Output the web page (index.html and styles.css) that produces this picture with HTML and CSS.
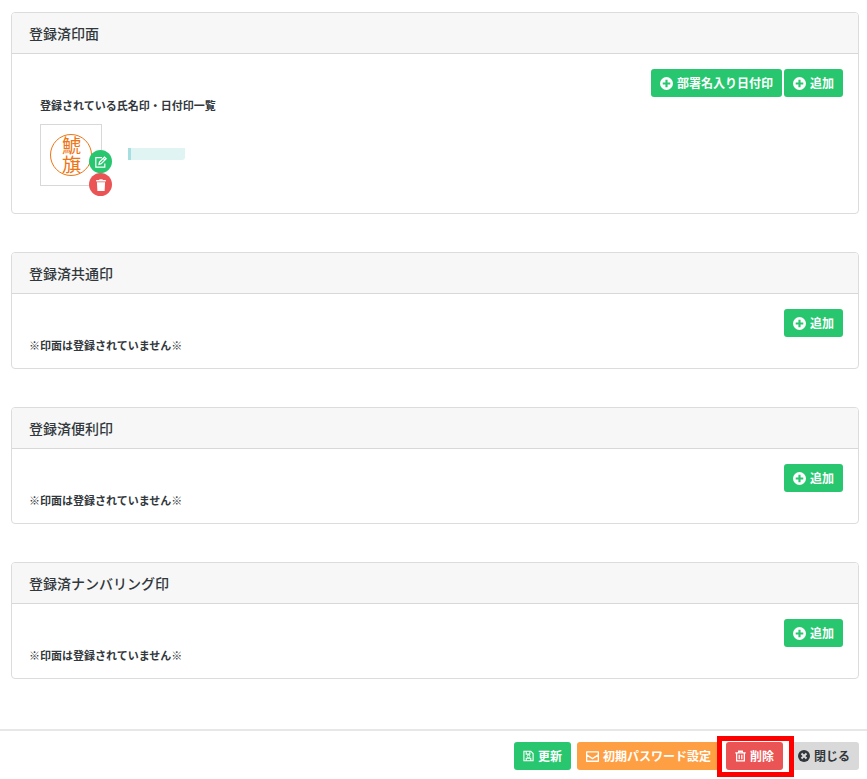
FILE: index.html
```html
<!DOCTYPE html>
<html lang="ja">
<head>
<meta charset="utf-8">
<meta name="viewport" content="width=device-width, initial-scale=1">
<title>登録済印面</title>
<link rel="stylesheet" href="styles.css">
</head>
<body>
<svg class="sprite" aria-hidden="true">
  <symbol id="plus" viewBox="0 0 12 12"><path fill="currentColor" fill-rule="evenodd" d="M6 0a6 6 0 1 0 0 12A6 6 0 0 0 6 0zM5 2.500h2V5h2.500v2H7v2.500H5V7H2.500V5H5z"/></symbol>
  <symbol id="close" viewBox="0 0 12 12"><circle cx="6" cy="6" r="6" fill="currentColor"/><path d="M3.500 3.500l5 5M8.500 3.500l-5 5" stroke="#d9d9d9" stroke-width="2"/></symbol>
  <symbol id="save" viewBox="0 0 12 12"><path fill="none" stroke="currentColor" stroke-width="1.200" d="M1 .8h7.500L11 3.300v7.900H1zM3.500 1v3h4V1M3.500 11V8.500h5V11"/><circle cx="6" cy="6.500" r="1.500" fill="none" stroke="currentColor"/></symbol>
  <symbol id="mail" viewBox="0 0 12 12"><path fill="none" stroke="currentColor" stroke-width="1.200" stroke-linejoin="round" d="M.6 1.800h10.800v8.600H.6zM.6 4.500L6 8l5.400-3.500"/></symbol>
  <symbol id="trash-line" viewBox="0 0 12 12"><path fill="none" stroke="currentColor" stroke-width="1.400" d="M.3 2.500h11.400M4 2.500V.8h4v1.700M1.800 2.500v8.700h8.400V2.500M4.600 4.500v5M7.400 4.500v5"/></symbol>
  <symbol id="trash" viewBox="0 0 12 12"><path fill="currentColor" d="M1.200 1H4l.7-.8h2.600L8 1h2.800v1.500H1.200zM1.900 3.200h8.200L9.600 12H2.400z"/></symbol>
  <symbol id="edit" viewBox="0 0 12 12"><path fill="none" stroke="currentColor" stroke-width="1.200" d="M7 1.600H.8v9.600h9V7.500M4 8.300l.5-2.300L9.500 1l1.700 1.700-5 5zM8.300 2.300L10 4"/></symbol>
</svg>

<main class="cards">
  <section class="card">
    <h2 class="card-title">登録済印面</h2>
    <div class="card-body">
      <div class="actions">
        <button type="button" class="btn green"><svg class="icon large"><use href="#plus"/></svg>部署名入り日付印</button>
        <button type="button" class="btn green"><svg class="icon large"><use href="#plus"/></svg>追加</button>
      </div>
      <div class="registered">
        <h3 class="label">登録されている氏名印・日付印一覧</h3>
        <div class="stamp-row">
          <div class="thumb">
            <div class="seal">鯱旗</div>
            <div class="tools">
              <button type="button" class="round green" aria-label="編集"><svg class="icon"><use href="#edit"/></svg></button>
              <button type="button" class="round red" aria-label="削除"><svg class="icon"><use href="#trash"/></svg></button>
            </div>
          </div>
          <div class="mask"></div>
        </div>
      </div>
    </div>
  </section>

  <section class="card">
    <h2 class="card-title">登録済共通印</h2>
    <div class="card-body">
      <div class="actions"><button type="button" class="btn green"><svg class="icon large"><use href="#plus"/></svg>追加</button></div>
      <p class="label">※印面は登録されていません※</p>
    </div>
  </section>

  <section class="card">
    <h2 class="card-title">登録済便利印</h2>
    <div class="card-body">
      <div class="actions"><button type="button" class="btn green"><svg class="icon large"><use href="#plus"/></svg>追加</button></div>
      <p class="label">※印面は登録されていません※</p>
    </div>
  </section>

  <section class="card">
    <h2 class="card-title">登録済ナンバリング印</h2>
    <div class="card-body">
      <div class="actions"><button type="button" class="btn green"><svg class="icon large"><use href="#plus"/></svg>追加</button></div>
      <p class="label">※印面は登録されていません※</p>
    </div>
  </section>
</main>

<footer class="footer">
  <button type="button" class="btn green"><svg class="icon small"><use href="#save"/></svg>更新</button>
  <button type="button" class="btn orange"><svg class="icon large"><use href="#mail"/></svg>初期パスワード設定</button>
  <div class="marked"><button type="button" class="btn red"><svg class="icon small"><use href="#trash-line"/></svg>削除</button></div>
  <button type="button" class="btn gray"><svg class="icon"><use href="#close"/></svg>閉じる</button>
</footer>
</body>
</html>
```
FILE: styles.css
```css
* {
  box-sizing: border-box;
}

body {
  margin: 0;
  background: #fff;
  color: #32373c;
  font-family: "Noto Sans CJK JP", sans-serif;
  font-size: 12px;
}

.sprite {
  display: none;
}

.cards {
  display: grid;
  gap: 38px;
  padding: 12px 8px 0 11px;
}

.card {
  border: 1px solid #dcdcdc;
  border-radius: 4px;
}

.card-title {
  margin: 0;
  padding: 10px 17px;
  border-bottom: 1px solid #d8d8d8;
  border-radius: 3px 3px 0 0;
  background: #f7f7f7;
  font-size: 14px;
  font-weight: 500;
  line-height: 20px;
}

.card-body {
  padding: 15px 15px 15px 17px;
}

.actions {
  display: flex;
  justify-content: flex-end;
  gap: 2px;
}

.label {
  margin: 0;
  font-size: 11px;
  font-weight: bold;
  line-height: 16px;
}

.registered {
  padding: 0 11px 12px;
}

.stamp-row {
  display: flex;
  gap: 26px;
  margin-top: 11px;
}

.thumb {
  position: relative;
  width: 62px;
  height: 62px;
  padding: 9px;
  border: 1px solid #d8d8d8;
}

.seal {
  display: flex;
  align-items: center;
  justify-content: center;
  width: 42px;
  height: 42px;
  border: 1px solid #ee7514;
  border-radius: 50%;
  color: #ee7514;
  font-size: 19px;
  line-height: 18px;
  writing-mode: vertical-rl;
}

.tools {
  position: absolute;
  top: 25px;
  right: -11px;
}

.round {
  display: flex;
  align-items: center;
  justify-content: center;
  width: 23px;
  height: 23px;
  padding: 0;
  border: 0;
  border-radius: 50%;
}

.mask {
  width: 57px;
  height: 12px;
  margin-top: 24px;
  border-left: 3px solid #a5dfdf;
  border-radius: 0 0 3px 0;
  background: #e0f4f4;
}

.btn {
  display: flex;
  align-items: center;
  gap: 4px;
  height: 28px;
  padding: 0 9px;
  border: 0;
  border-radius: 3px;
  font: bold 12px/18px "Noto Sans CJK JP", sans-serif;
  white-space: nowrap;
}

.icon {
  width: 12px;
  height: 12px;
}

.icon.large {
  width: 13px;
  height: 13px;
}

.icon.small {
  width: 11px;
  height: 12px;
}

.green {
  background: #28c76f;
  color: #fff;
}

.orange {
  background: #ff9f43;
  color: #fff;
}

.red {
  background: #ea5455;
  color: #fff;
}

.gray {
  background: #d9d9d9;
  color: #32373c;
}

.footer {
  display: flex;
  justify-content: flex-end;
  gap: 6px;
  margin-top: 50px;
  padding: 11px 8px 8px;
  border-top: 2px solid #e7e7e7;
}

.marked {
  position: relative;
}

.marked::after {
  content: "";
  position: absolute;
  inset: -6px -11px -7px -9px;
  border: 5px solid #f00;
  pointer-events: none;
}
```
